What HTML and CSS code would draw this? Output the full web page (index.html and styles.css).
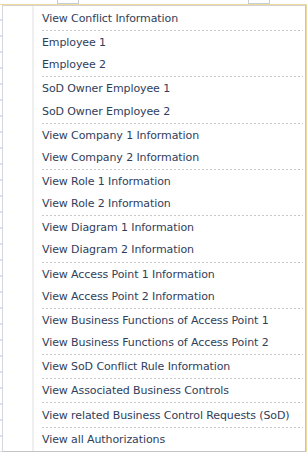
FILE: index.html
```html
<!DOCTYPE html>
<html lang="en">

<head>
    <meta charset="UTF-8">
    <meta name="viewport" content="width=device-width, initial-scale=1.0">
    <title>Context menu</title>
    <link rel="stylesheet" href="styles.css">
</head>

<body>
    <div class="topbar">
        <span class="cell cell-a"></span>
        <span class="cell cell-b"></span>
    </div>
    <div class="page">
        <div class="grid-edge"></div>
        <div class="menu">
            <div class="gutter"></div>
            <ul class="menu-list">
                <li>View Conflict Information</li>
                <li class="sep"></li>
                <li>Employee 1</li>
                <li>Employee 2</li>
                <li class="sep"></li>
                <li>SoD Owner Employee 1</li>
                <li>SoD Owner Employee 2</li>
                <li class="sep"></li>
                <li>View Company 1 Information</li>
                <li>View Company 2 Information</li>
                <li class="sep"></li>
                <li>View Role 1 Information</li>
                <li>View Role 2 Information</li>
                <li class="sep"></li>
                <li>View Diagram 1 Information</li>
                <li>View Diagram 2 Information</li>
                <li class="sep"></li>
                <li>View Access Point 1 Information</li>
                <li>View Access Point 2 Information</li>
                <li class="sep"></li>
                <li>View Business Functions of Access Point 1</li>
                <li>View Business Functions of Access Point 2</li>
                <li class="sep"></li>
                <li>View SoD Conflict Rule Information</li>
                <li class="sep"></li>
                <li>View Associated Business Controls</li>
                <li class="sep"></li>
                <li>View related Business Control Requests (SoD)</li>
                <li class="sep"></li>
                <li>View all Authorizations</li>
            </ul>
        </div>
        <div class="grid-edge right"></div>
    </div>
</body>

</html>
```

FILE: styles.css
```css
html,
body {
    margin: 0;
    padding: 0;
    background: #fff;
    overflow: hidden;
}

ul {
    margin: 0;
    padding: 0;
    list-style: none;
}

.topbar {
    display: flex;
    height: 4px;
    border-bottom: 1px solid #ecd99c;
}

.cell {
    display: block;
    height: 3px;
    border: 1px solid #c9ced6;
    border-top: none;
}

.cell-a {
    margin-left: 57px;
    width: 20px;
}

.cell-b {
    margin-left: 169px;
    width: 20px;
}

.page {
    display: flex;
}

.grid-edge {
    width: 2px;
    background: repeating-linear-gradient(to bottom, #fff 0 14px, #d6e0ee 14px 16px);
}

.grid-edge.right {
    width: 1px;
    background: #ecd99c;
}

.menu {
    display: flex;
    width: 302px;
    border: 1px solid #c4c4c4;
    border-top-color: #d2d2d2;
    border-left-color: #d4d8de;
    background: #fff;
    font-family: "DejaVu Sans", Verdana, sans-serif;
    font-size: 11px;
    letter-spacing: -0.1px;
    color: #2f3e5b;
}

.gutter {
    width: 29px;
    border-right: 2px solid #efefef;
}

.menu-list {
    flex: 1;
    padding: 2px 2px 0 8px;
}

.menu-list li {
    height: 22.1px;
    line-height: 22.1px;
    white-space: nowrap;
}

.menu-list .sep {
    height: 2.1px;
    background: repeating-linear-gradient(to right, #c8c8c8 0 2px, transparent 2px 4px) top / 100% 1px no-repeat;
}
```
